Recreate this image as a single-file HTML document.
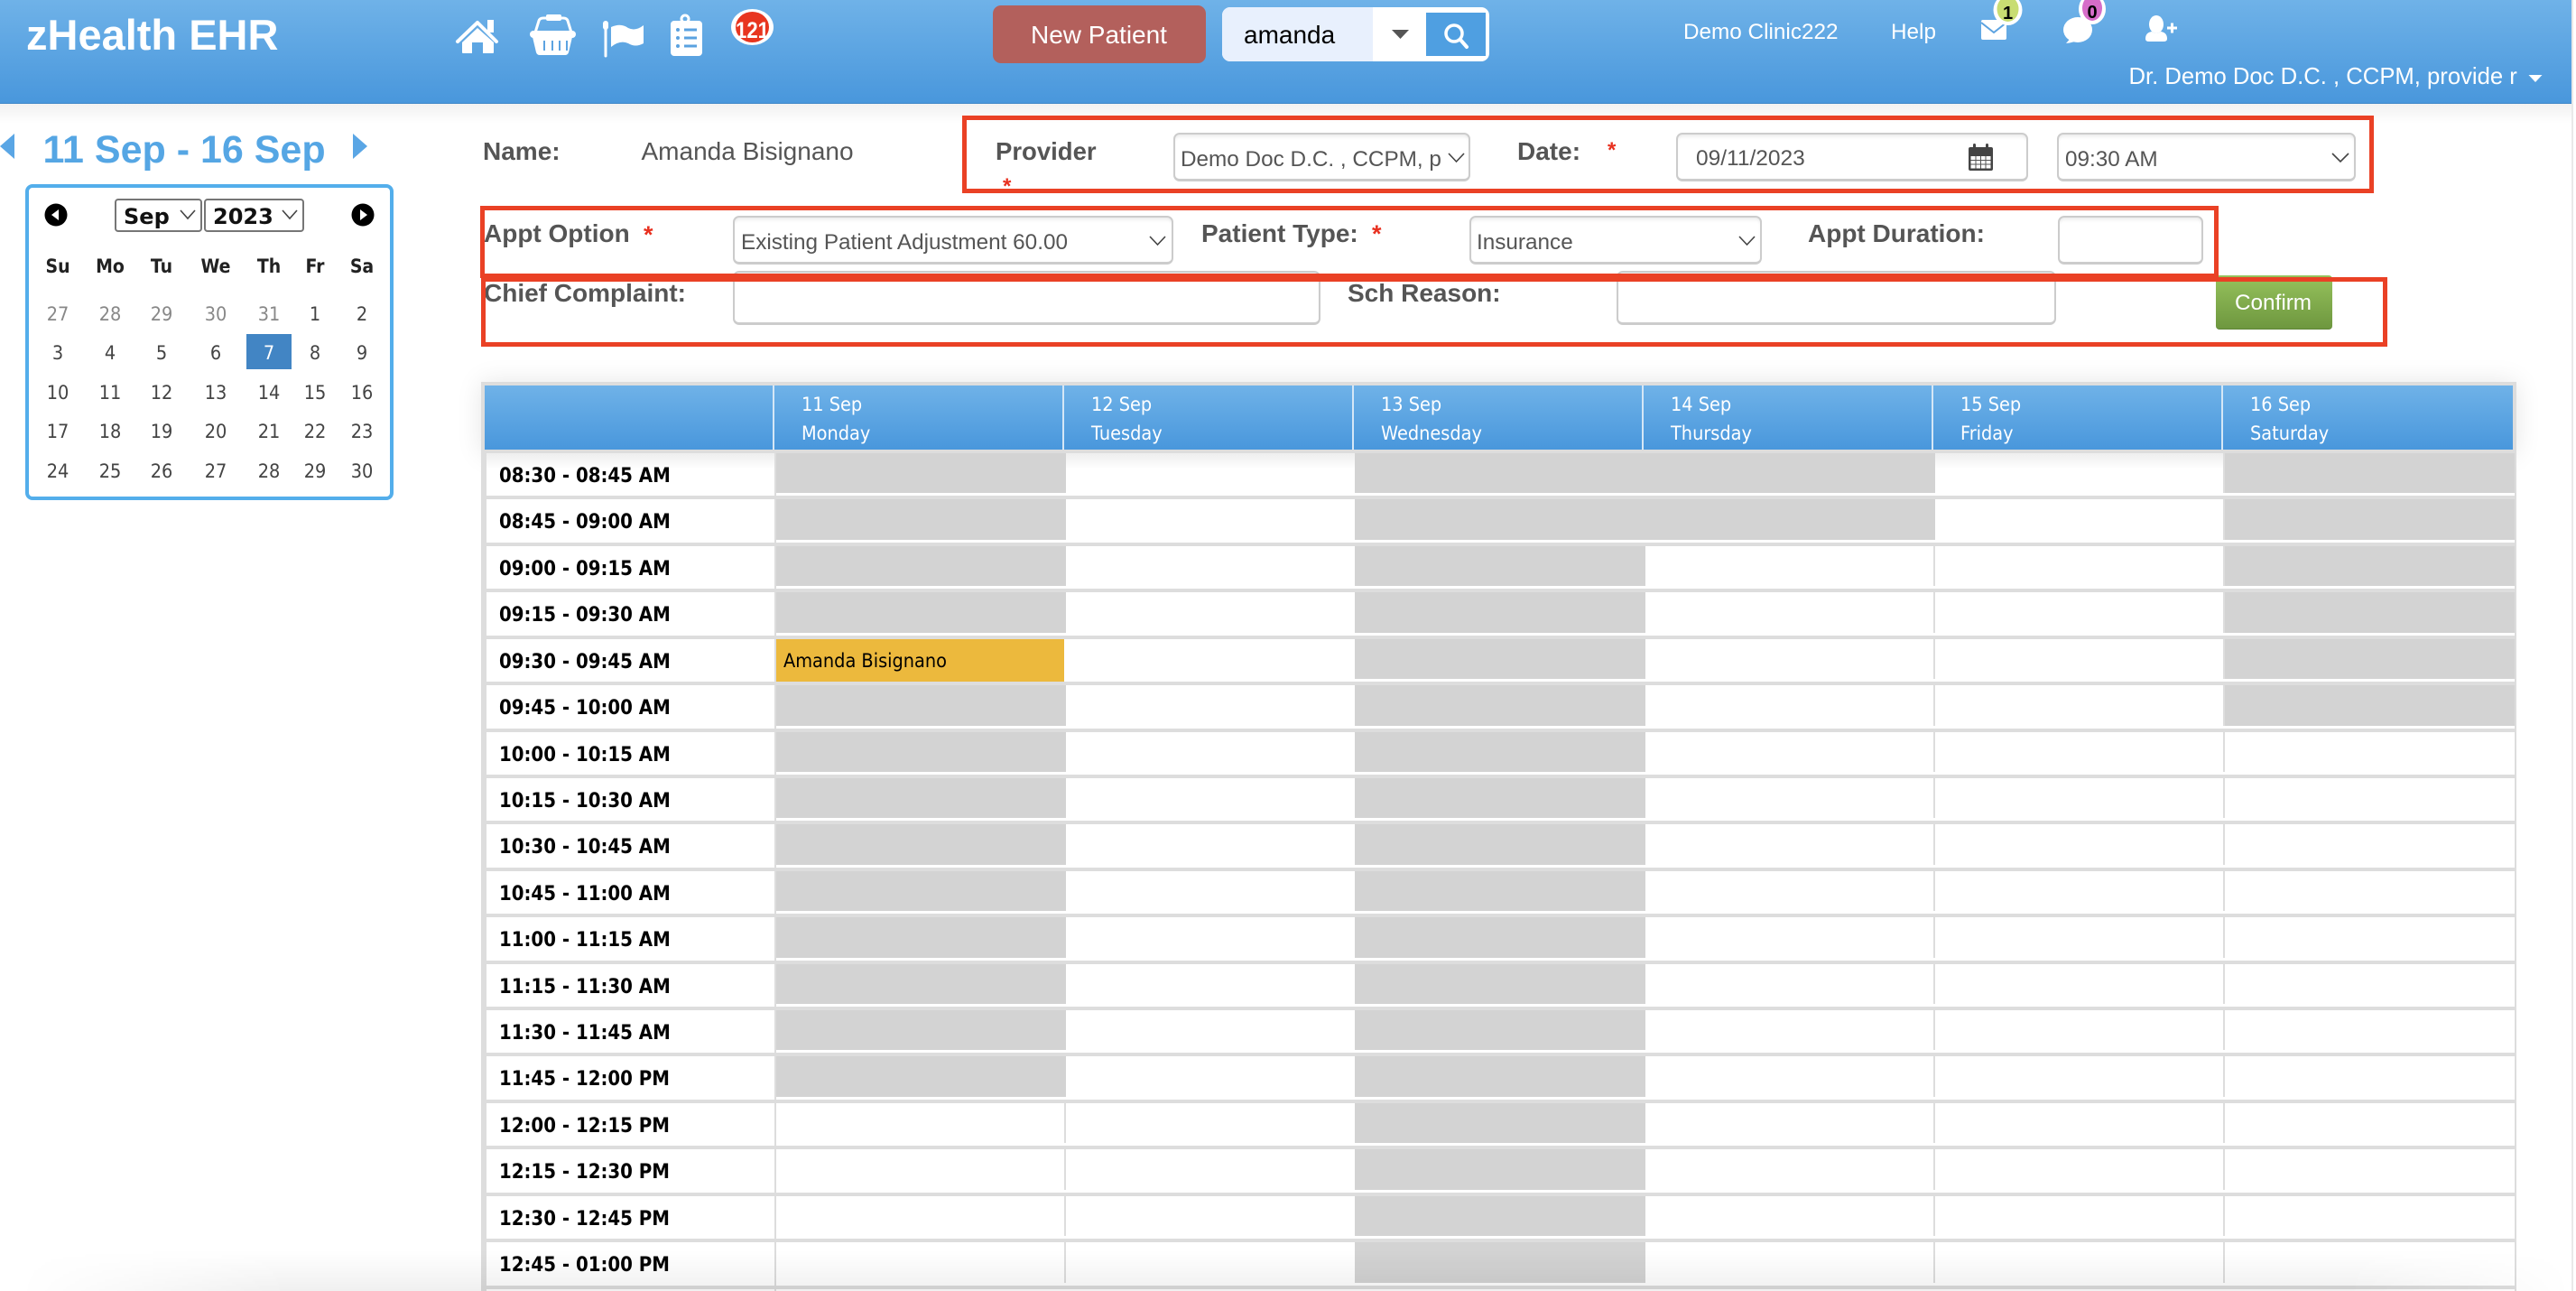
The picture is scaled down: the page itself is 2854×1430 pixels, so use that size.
<!DOCTYPE html>
<html lang="en">
<head>
<meta charset="utf-8">
<title>zHealth EHR</title>
<style>
html,body{margin:0;padding:0;width:2854px;height:1430px;overflow:hidden;background:#fff}
body{position:relative;font-family:"Liberation Sans",sans-serif}
.abs,.box,.r,.r i{position:absolute;display:block}
.hdr{left:0;top:0;width:2849px;height:114px;background:linear-gradient(#6fb2e8,#4997dc);border-bottom:1px solid #3f87c8}
.hshadow{left:0;top:115px;width:2849px;height:22px;background:linear-gradient(#f1f1f1,#fff)}
.rline{left:2849px;top:0;width:2px;height:1430px;background:#e9e9e9}
.box{background:#fff;border:2px solid #ccc;border-bottom-width:3px;border-radius:7px;box-sizing:border-box;box-shadow:inset 0 4px 4px -2px rgba(0,0,0,.09)}
.frame{left:533px;top:423px;width:2255px;height:1007px;background:#ddd}
.fshadow{left:533px;top:423px;width:2255px;height:80px;box-shadow:0 0 28px rgba(0,0,0,.1)}
.thead{left:537px;top:427px;width:2247px;height:71px;background:linear-gradient(#6fb2e8,#4997dc)}
.hd{top:427px;width:2px;height:71px;background:#d5e7f6}
.r{left:539px;width:2247px;background:#fff}
.r i.a,.r i.c,.r i.d,.r i.f{top:0;bottom:3px;background:#d3d3d3}
.r i.a{left:321px;width:321px}
.r i.c{left:962px;width:322px}
.r i.d{left:1284px;width:321px}
.r i.f{left:1926px;width:321px}
.r i.y{left:321px;width:319px;top:0;bottom:0;background:#ecb93d}
.r i.v0{left:319px;width:2px;top:0;bottom:0;background:#ddd}
.r i.v1{left:640px;width:2px;top:0;bottom:3px;background:#ddd}
.r i.v3{left:1603px;width:2px;top:0;bottom:3px;background:#ddd}
.r i.v5{left:1924px;width:2px;top:0;bottom:3px;background:#ddd}
.top0{background:linear-gradient(#eee,#fff 18px)}
.bshade{left:0;top:1385px;width:2854px;height:45px;background:linear-gradient(rgba(0,0,0,0),rgba(0,0,0,.06));-webkit-mask-image:linear-gradient(90deg,transparent 20px,#000 320px,#000 2600px,transparent 2850px);mask-image:linear-gradient(90deg,transparent 20px,#000 320px,#000 2600px,transparent 2850px)}
svg{position:absolute;left:0;top:0}
text{font-family:"Liberation Sans",sans-serif;white-space:pre}
.dj{font-family:"DejaVu Sans",sans-serif}
.lab{font-size:28px;font-weight:700;fill:#555}
.val{font-size:24.3px;fill:#555}
.wh{fill:#fff}
.tm{font-family:"DejaVu Sans",sans-serif;font-size:22px;font-weight:700;fill:#000}
.th{font-family:"DejaVu Sans",sans-serif;font-size:21.5px;fill:#fff}
.dw{font-family:"DejaVu Sans",sans-serif;font-size:21px;font-weight:700;fill:#222;text-anchor:middle}
.dn{font-family:"DejaVu Sans",sans-serif;font-size:21.5px;fill:#444;text-anchor:middle}
.dg{fill:#888}
.chev{fill:none;stroke:#444;stroke-width:1.6}
.red{fill:none;stroke:#ea4125;stroke-width:5}
</style>
</head>
<body>
<div class="abs hshadow"></div>
<div class="abs hdr"></div>
<div class="abs rline"></div>

<div class="abs" style="left:1100px;top:6px;width:236px;height:64px;background:#b3605c;border-radius:9px"></div>
<div class="abs" style="left:1354px;top:8px;width:296px;height:60px;background:#fff;border-radius:9px"></div>
<div class="abs" style="left:1354px;top:8px;width:167px;height:60px;background:#e8f0fd;border-radius:9px 0 0 9px"></div>
<div class="abs" style="left:1580px;top:14px;width:66px;height:48px;background:#4f9fe1"></div>

<div class="box" style="left:1300px;top:147px;width:329px;height:54px"></div>
<div class="box" style="left:1857px;top:147px;width:390px;height:54px"></div>
<div class="box" style="left:2279px;top:147px;width:331px;height:54px"></div>
<div class="box" style="left:812px;top:239px;width:488px;height:54px"></div>
<div class="box" style="left:1628px;top:239px;width:324px;height:54px"></div>
<div class="box" style="left:2280px;top:239px;width:161px;height:54px"></div>
<div class="box" style="left:812px;top:300px;width:651px;height:60px"></div>
<div class="box" style="left:1791px;top:300px;width:487px;height:60px"></div>
<div class="abs" style="left:2455px;top:305px;width:129px;height:60px;border-radius:4px;background:linear-gradient(#96c25c,#6e973f);border-bottom:1px solid #5f8536;box-sizing:border-box"></div>

<div class="abs" style="left:28px;top:204px;width:408px;height:350px;border:4px solid #53aeeb;border-radius:8px;box-sizing:border-box"></div>
<div class="abs" style="left:273px;top:370px;width:50px;height:39px;background:#4285c4"></div>
<div class="abs" style="left:127px;top:220px;width:97px;height:37px;border:2px solid #767676;border-radius:4px;box-sizing:border-box"></div>
<div class="abs" style="left:226px;top:220px;width:111px;height:37px;border:2px solid #767676;border-radius:4px;box-sizing:border-box"></div>

<div class="abs fshadow"></div>
<div class="abs frame"></div>
<div class="abs thead"></div>
<div class="abs hd" style="left:856px"></div>
<div class="abs hd" style="left:1177px"></div>
<div class="abs hd" style="left:1498px"></div>
<div class="abs hd" style="left:1819px"></div>
<div class="abs hd" style="left:2140px"></div>
<div class="abs hd" style="left:2461px"></div>

<div class="r top0" style="top:502px;height:47px"><i class="v0"></i><i class="a"></i><i class="c"></i><i class="d"></i><i class="v5"></i><i class="f"></i></div>
<div class="r" style="top:553px;height:48px"><i class="v0"></i><i class="a"></i><i class="c"></i><i class="d"></i><i class="v5"></i><i class="f"></i></div>
<div class="r" style="top:605px;height:47px"><i class="v0"></i><i class="a"></i><i class="c"></i><i class="v3"></i><i class="v5"></i><i class="f"></i></div>
<div class="r" style="top:656px;height:48px"><i class="v0"></i><i class="a"></i><i class="c"></i><i class="v3"></i><i class="v5"></i><i class="f"></i></div>
<div class="r" style="top:708px;height:47px"><i class="v0"></i><i class="y"></i><i class="c"></i><i class="v3"></i><i class="v5"></i><i class="f"></i></div>
<div class="r" style="top:759px;height:48px"><i class="v0"></i><i class="a"></i><i class="c"></i><i class="v3"></i><i class="v5"></i><i class="f"></i></div>
<div class="r" style="top:811px;height:47px"><i class="v0"></i><i class="a"></i><i class="c"></i><i class="v3"></i><i class="v5"></i></div>
<div class="r" style="top:862px;height:47px"><i class="v0"></i><i class="a"></i><i class="c"></i><i class="v3"></i><i class="v5"></i></div>
<div class="r" style="top:913px;height:48px"><i class="v0"></i><i class="a"></i><i class="c"></i><i class="v3"></i><i class="v5"></i></div>
<div class="r" style="top:965px;height:47px"><i class="v0"></i><i class="a"></i><i class="c"></i><i class="v3"></i><i class="v5"></i></div>
<div class="r" style="top:1016px;height:48px"><i class="v0"></i><i class="a"></i><i class="c"></i><i class="v3"></i><i class="v5"></i></div>
<div class="r" style="top:1068px;height:47px"><i class="v0"></i><i class="a"></i><i class="c"></i><i class="v3"></i><i class="v5"></i></div>
<div class="r" style="top:1119px;height:47px"><i class="v0"></i><i class="a"></i><i class="c"></i><i class="v3"></i><i class="v5"></i></div>
<div class="r" style="top:1170px;height:48px"><i class="v0"></i><i class="a"></i><i class="c"></i><i class="v3"></i><i class="v5"></i></div>
<div class="r" style="top:1222px;height:47px"><i class="v0"></i><i class="v1"></i><i class="c"></i><i class="v3"></i><i class="v5"></i></div>
<div class="r" style="top:1273px;height:48px"><i class="v0"></i><i class="v1"></i><i class="c"></i><i class="v3"></i><i class="v5"></i></div>
<div class="r" style="top:1325px;height:47px"><i class="v0"></i><i class="v1"></i><i class="c"></i><i class="v3"></i><i class="v5"></i></div>
<div class="r" style="top:1376px;height:48px"><i class="v0"></i><i class="v1"></i><i class="c"></i><i class="v3"></i><i class="v5"></i></div>
<div class="r" style="top:1428px;height:2px"><i class="v0"></i><i class="v1"></i><i class="v3"></i><i class="v5"></i></div>

<svg width="2854" height="1430" viewBox="0 0 2854 1430" xmlns="http://www.w3.org/2000/svg">
  <!-- header text -->
  <text x="29" y="55" font-size="47" font-weight="700" class="wh">zHealth EHR</text>
  <text x="1142" y="48" font-size="28" class="wh">New Patient</text>
  <text x="1378" y="48" font-size="28" fill="#000">amanda</text>
  <text x="1865" y="43" font-size="24.3" class="wh">Demo Clinic222</text>
  <text x="2095" y="43" font-size="24.3" class="wh">Help</text>
  <text x="2358.500" y="93" font-size="25.650" class="wh">Dr. Demo Doc D.C. , CCPM, provide r</text>
  <polygon points="2801.500,83 2816.500,83 2809,91" fill="#fff"/>

  <!-- home -->
  <path d="M507 46 L529 25 L550 46" fill="none" stroke="#fff" stroke-width="4" stroke-linecap="round" stroke-linejoin="round"/>
  <rect x="540" y="22" width="7" height="14" fill="#fff"/>
  <path d="M512 47 L529 31 L547 47 V58 Q547 59 546 59 H535 V47 H523 V59 H513 Q512 59 512 58Z" fill="#fff"/>
  <!-- basket -->
  <path d="M593 36 L597 23 Q598 20 602 20 H624 Q628 20 629 23 L633 36" fill="none" stroke="#fff" stroke-width="3"/>
  <rect x="605" y="16" width="17" height="7" rx="2" fill="#fff"/>
  <rect x="587" y="34" width="51" height="8" rx="4" fill="#fff"/>
  <path d="M590 41 H634 L630 58 Q629 61 626 61 H598 Q595 61 594 58Z" fill="#fff"/>
  <path d="M603 45 V56 M612 45 V56 M620 45 V56 M628 45 V56" stroke="#5ca3e1" stroke-width="2"/>
  <!-- flag -->
  <path d="M671 30 V62" stroke="#fff" stroke-width="3" stroke-linecap="round"/>
  <rect x="668" y="23" width="6" height="10" rx="3" fill="#fff"/>
  <path d="M677 30 Q688 25 696 31 Q704 35 713 28 V48 Q704 53 696 48 Q687 44 677 52Z" fill="#fff"/>
  <!-- clipboard -->
  <rect x="743" y="23" width="35" height="39" rx="4" fill="#fff"/>
  <circle cx="759" cy="21" r="4" fill="none" stroke="#fff" stroke-width="3"/>
  <path d="M758 33 H772 M758 42 H772 M758 51 H772" stroke="#5aa2e0" stroke-width="3"/>
  <circle cx="751" cy="33" r="2" fill="#5aa2e0"/><circle cx="751" cy="42" r="2" fill="#5aa2e0"/><circle cx="751" cy="51" r="2" fill="#5aa2e0"/>
  <!-- 121 badge -->
  <ellipse cx="833.500" cy="30" rx="23.500" ry="20" fill="#fff"/>
  <ellipse cx="833.500" cy="30" rx="18.500" ry="17" fill="#e8351f"/>
  <text x="815" y="42" font-size="25" font-weight="700" class="wh" textLength="37" lengthAdjust="spacingAndGlyphs">121</text>
  <!-- search -->
  <polygon points="1542,33 1561,33 1551.500,43" fill="#555"/>
  <circle cx="1611" cy="37" r="9" fill="none" stroke="#fff" stroke-width="3.500"/>
  <path d="M1618 44 L1625 52" stroke="#fff" stroke-width="4" stroke-linecap="round"/>
  <g transform="translate(-2,0)">
    <!-- mail -->
    <rect x="2197" y="22" width="28" height="22" rx="2" fill="#fff"/>
    <path d="M2197 25 L2211 36 L2225 25" fill="none" stroke="#5ca3e1" stroke-width="2"/>
    <ellipse cx="2226.500" cy="11" rx="16" ry="17" fill="#fff"/>
    <ellipse cx="2226.500" cy="10" rx="12" ry="14" fill="#c8dd72"/>
    <text x="2221" y="21" font-size="20" font-weight="700" fill="#000">1</text>
    <!-- chat -->
    <ellipse cx="2304" cy="33" rx="16" ry="14" fill="#fff"/>
    <path d="M2298 40 L2291 48 Q2301 47 2310 42Z" fill="#fff"/>
    <ellipse cx="2320" cy="10" rx="15" ry="17" fill="#fff"/>
    <ellipse cx="2320" cy="9" rx="11" ry="14" fill="#d66dc9"/>
    <text x="2314.500" y="20" font-size="20" font-weight="700" fill="#000">0</text>
    <!-- user plus -->
    <ellipse cx="2391" cy="27" rx="8" ry="10" fill="#fff"/>
    <path d="M2379 43 Q2379 36 2386 35 Q2391 39 2396 35 Q2403 36 2403 43 Q2403 46 2399 46 H2383 Q2379 46 2379 43Z" fill="#fff"/>
    <path d="M2403 31 H2414 M2408.500 25.500 V36.500" stroke="#fff" stroke-width="3"/>
  </g>

  <!-- week nav -->
  <polygon points="0,162 16,148 16,176" fill="#5aa6e5"/>
  <polygon points="407,162 391,148 391,176" fill="#5aa6e5"/>
  <text x="47.500" y="180" font-size="43" font-weight="700" fill="#55a6e4">11 Sep - 16 Sep</text>

  <!-- mini calendar -->
  <circle cx="62" cy="238" r="12.500" fill="#000"/><polygon points="57,238 65,232 65,244" fill="#fff"/>
  <circle cx="402" cy="238" r="12.500" fill="#000"/><polygon points="407,238 399,232 399,244" fill="#fff"/>
  <text x="137" y="248" class="dj" font-size="24" font-weight="700" fill="#111">Sep</text>
  <text x="236" y="248" class="dj" font-size="24" font-weight="700" fill="#111">2023</text>
  <path class="chev" d="M200 233 L208 242 L216 233 M313 233 L321 242 L329 233"/>
  <text class="dw" transform="translate(64,302) scale(.9,1)">Su</text>
  <text class="dw" transform="translate(122,302) scale(.9,1)">Mo</text>
  <text class="dw" transform="translate(179,302) scale(.9,1)">Tu</text>
  <text class="dw" transform="translate(239,302) scale(.9,1)">We</text>
  <text class="dw" transform="translate(298,302) scale(.9,1)">Th</text>
  <text class="dw" transform="translate(349,302) scale(.9,1)">Fr</text>
  <text class="dw" transform="translate(401,302) scale(.9,1)">Sa</text>
  <text class="dn dg" transform="translate(64,355) scale(.9,1)">27</text>
  <text class="dn dg" transform="translate(122,355) scale(.9,1)">28</text>
  <text class="dn dg" transform="translate(179,355) scale(.9,1)">29</text>
  <text class="dn dg" transform="translate(239,355) scale(.9,1)">30</text>
  <text class="dn dg" transform="translate(298,355) scale(.9,1)">31</text>
  <text class="dn" transform="translate(349,355) scale(.9,1)">1</text>
  <text class="dn" transform="translate(401,355) scale(.9,1)">2</text>
  <text class="dn" transform="translate(64,398) scale(.9,1)">3</text>
  <text class="dn" transform="translate(122,398) scale(.9,1)">4</text>
  <text class="dn" transform="translate(179,398) scale(.9,1)">5</text>
  <text class="dn" transform="translate(239,398) scale(.9,1)">6</text>
  <text class="dn" style="fill:#fff" transform="translate(298,398) scale(.9,1)">7</text>
  <text class="dn" transform="translate(349,398) scale(.9,1)">8</text>
  <text class="dn" transform="translate(401,398) scale(.9,1)">9</text>
  <text class="dn" transform="translate(64,442) scale(.9,1)">10</text>
  <text class="dn" transform="translate(122,442) scale(.9,1)">11</text>
  <text class="dn" transform="translate(179,442) scale(.9,1)">12</text>
  <text class="dn" transform="translate(239,442) scale(.9,1)">13</text>
  <text class="dn" transform="translate(298,442) scale(.9,1)">14</text>
  <text class="dn" transform="translate(349,442) scale(.9,1)">15</text>
  <text class="dn" transform="translate(401,442) scale(.9,1)">16</text>
  <text class="dn" transform="translate(64,485) scale(.9,1)">17</text>
  <text class="dn" transform="translate(122,485) scale(.9,1)">18</text>
  <text class="dn" transform="translate(179,485) scale(.9,1)">19</text>
  <text class="dn" transform="translate(239,485) scale(.9,1)">20</text>
  <text class="dn" transform="translate(298,485) scale(.9,1)">21</text>
  <text class="dn" transform="translate(349,485) scale(.9,1)">22</text>
  <text class="dn" transform="translate(401,485) scale(.9,1)">23</text>
  <text class="dn" transform="translate(64,529) scale(.9,1)">24</text>
  <text class="dn" transform="translate(122,529) scale(.9,1)">25</text>
  <text class="dn" transform="translate(179,529) scale(.9,1)">26</text>
  <text class="dn" transform="translate(239,529) scale(.9,1)">27</text>
  <text class="dn" transform="translate(298,529) scale(.9,1)">28</text>
  <text class="dn" transform="translate(349,529) scale(.9,1)">29</text>
  <text class="dn" transform="translate(401,529) scale(.9,1)">30</text>

  <!-- form -->
  <text x="535" y="177" class="lab">Name:</text>
  <text x="710.500" y="177" font-size="28" fill="#555">Amanda Bisignano</text>
  <text x="1103" y="177" class="lab" style="font-size:27.5px">Provider</text>
  <text x="1111" y="214" font-size="24" font-weight="700" fill="#e8301f">*</text>
  <text x="1308" y="184" class="val">Demo Doc D.C. , CCPM, p</text>
  <path class="chev" d="M1605 170 L1613.500 179 L1622 170"/>
  <text x="1681" y="177" class="lab">Date:</text>
  <text x="1781" y="174" font-size="24" font-weight="700" fill="#e8301f">*</text>
  <text x="1879" y="183" class="val" style="font-size:24.5px">09/11/2023</text>
  <rect x="2181" y="163" width="27" height="26" rx="2" fill="#444"/>
  <rect x="2186" y="159" width="3" height="8" rx="1.500" fill="#444"/>
  <rect x="2200" y="159" width="3" height="8" rx="1.500" fill="#444"/>
  <path d="M2183.500 173 H2205.500 V186.500 H2183.500Z" fill="#fff"/>
  <path d="M2183.500 177.500 H2205.500 M2183.500 182 H2205.500 M2189 173 V186.500 M2194.500 173 V186.500 M2200 173 V186.500" stroke="#555" stroke-width="1"/>
  <text x="2288" y="184" class="val">09:30 AM</text>
  <path class="chev" d="M2584 170 L2593 179 L2602 170"/>

  <text x="536" y="268" class="lab">Appt Option</text>
  <text x="713" y="269" font-size="27" font-weight="700" fill="#e8301f">*</text>
  <text x="821" y="276" class="val">Existing Patient Adjustment 60.00</text>
  <path class="chev" d="M1274 262 L1282.500 271 L1291 262"/>
  <text x="1331" y="268" class="lab">Patient Type:</text>
  <text x="1520" y="268" font-size="27" font-weight="700" fill="#e8301f">*</text>
  <text x="1636" y="276" class="val">Insurance</text>
  <path class="chev" d="M1927 262 L1935.500 271 L1944 262"/>
  <text x="2003" y="268" class="lab">Appt Duration:</text>

  <text x="536" y="334" class="lab">Chief Complaint:</text>
  <text x="1493" y="334" class="lab">Sch Reason:</text>
  <text x="2476" y="343" font-size="24.300" class="wh">Confirm</text>

  <!-- red annotations -->
  <rect class="red" x="1068.500" y="130.500" width="1559" height="81"/>
  <rect class="red" x="534.500" y="230.500" width="1921" height="75"/>
  <rect class="red" x="535.500" y="309.500" width="2107" height="72"/>

  <!-- table header -->
  <text class="th" transform="translate(888,455) scale(.9,1)">11 Sep</text>
  <text class="th" transform="translate(888,487) scale(.9,1)">Monday</text>
  <text class="th" transform="translate(1209,455) scale(.9,1)">12 Sep</text>
  <text class="th" transform="translate(1209,487) scale(.9,1)">Tuesday</text>
  <text class="th" transform="translate(1530,455) scale(.9,1)">13 Sep</text>
  <text class="th" transform="translate(1530,487) scale(.9,1)">Wednesday</text>
  <text class="th" transform="translate(1851,455) scale(.9,1)">14 Sep</text>
  <text class="th" transform="translate(1851,487) scale(.9,1)">Thursday</text>
  <text class="th" transform="translate(2172,455) scale(.9,1)">15 Sep</text>
  <text class="th" transform="translate(2172,487) scale(.9,1)">Friday</text>
  <text class="th" transform="translate(2493,455) scale(.9,1)">16 Sep</text>
  <text class="th" transform="translate(2493,487) scale(.9,1)">Saturday</text>

  <!-- time column -->
  <text class="tm" transform="translate(553,534) scale(.9,1)">08:30 - 08:45 AM</text>
  <text class="tm" transform="translate(553,585) scale(.9,1)">08:45 - 09:00 AM</text>
  <text class="tm" transform="translate(553,637) scale(.9,1)">09:00 - 09:15 AM</text>
  <text class="tm" transform="translate(553,688) scale(.9,1)">09:15 - 09:30 AM</text>
  <text class="tm" transform="translate(553,740) scale(.9,1)">09:30 - 09:45 AM</text>
  <text class="tm" transform="translate(553,791) scale(.9,1)">09:45 - 10:00 AM</text>
  <text class="tm" transform="translate(553,843) scale(.9,1)">10:00 - 10:15 AM</text>
  <text class="tm" transform="translate(553,894) scale(.9,1)">10:15 - 10:30 AM</text>
  <text class="tm" transform="translate(553,945) scale(.9,1)">10:30 - 10:45 AM</text>
  <text class="tm" transform="translate(553,997) scale(.9,1)">10:45 - 11:00 AM</text>
  <text class="tm" transform="translate(553,1048) scale(.9,1)">11:00 - 11:15 AM</text>
  <text class="tm" transform="translate(553,1100) scale(.9,1)">11:15 - 11:30 AM</text>
  <text class="tm" transform="translate(553,1151) scale(.9,1)">11:30 - 11:45 AM</text>
  <text class="tm" transform="translate(553,1202) scale(.9,1)">11:45 - 12:00 PM</text>
  <text class="tm" transform="translate(553,1254) scale(.9,1)">12:00 - 12:15 PM</text>
  <text class="tm" transform="translate(553,1305) scale(.9,1)">12:15 - 12:30 PM</text>
  <text class="tm" transform="translate(553,1357) scale(.9,1)">12:30 - 12:45 PM</text>
  <text class="tm" transform="translate(553,1408) scale(.9,1)">12:45 - 01:00 PM</text>

  <text class="dj" font-size="21.500" fill="#000" transform="translate(868,739) scale(.9,1)">Amanda Bisignano</text>
</svg>

<div class="abs bshade"></div>
</body>
</html>
